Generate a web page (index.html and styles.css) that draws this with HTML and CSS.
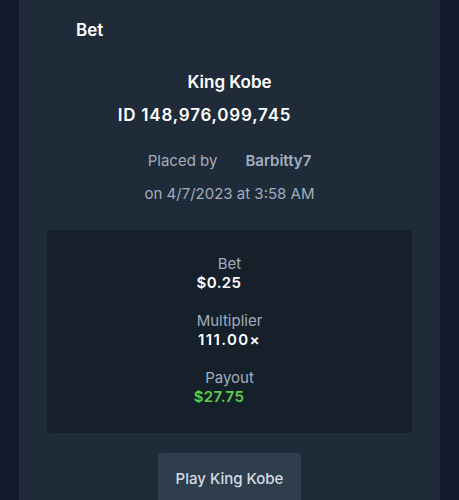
FILE: index.html
```html
<!doctype html>
<html lang="en">
    <head>
        <meta charset="UTF-8" />
        <meta name="viewport" content="width=device-width, initial-scale=1.0" />
        <title>Bet</title>
        <link rel="stylesheet" href="styles.css">
    </head>
    <body>
        <div class="panel">
            <div class="title">Bet</div>
            <div class="game">King Kobe</div>
            <div class="bet-id">ID 148,976,099,745</div>
            <div class="placed">
                <span class="placed-label">Placed by</span>
                <span class="user">Barbitty7</span>
            </div>
            <div class="date">on 4/7/2023 at 3:58 AM</div>
            <div class="stats">
                <div class="stat">
                    <div class="label">Bet</div>
                    <div class="value shift">$0.25</div>
                </div>
                <div class="stat">
                    <div class="label">Multiplier</div>
                    <div class="value wide">111.00×</div>
                </div>
                <div class="stat">
                    <div class="label">Payout</div>
                    <div class="value shift green">$27.75</div>
                </div>
            </div>
            <div class="actions">
                <button class="play">Play King Kobe</button>
            </div>
        </div>
    </body>
</html>
```

FILE: styles.css
```css
:root {
    --bg: #141a2b;
    --panel: #1f2b38;
    --inner: #15202b;
    --muted: #a3adbd;
    --green: #5fcf4a;
}
html, body {
    margin: 0;
    height: 100%;
    overflow: hidden;
}
body {
    background: var(--bg);
    color: white;
    font-family: Inter, "Open Sans", Arial, sans-serif;
}
.panel {
    background: var(--panel);
    margin: 0 19px;
    height: 100%;
    padding-top: 20px;
    box-sizing: border-box;
}
.title {
    font-size: 17px;
    font-weight: 600;
    line-height: 20px;
    padding-left: 57px;
}
.game {
    font-size: 17px;
    font-weight: 600;
    line-height: 20px;
    text-align: center;
    margin-top: 32px;
}
.bet-id {
    font-size: 17px;
    font-weight: 600;
    line-height: 20px;
    letter-spacing: 0.8px;
    text-align: center;
    margin-top: 13px;
    padding-right: 50px;
}
.placed {
    margin-top: 26px;
    line-height: 20px;
    font-size: 15px;
    color: var(--muted);
    display: flex;
    justify-content: center;
    gap: 28px;
}
.user {
    font-weight: 600;
}
.date {
    margin-top: 13px;
    line-height: 20px;
    font-size: 15px;
    color: var(--muted);
    text-align: center;
}
.stats {
    background: var(--inner);
    margin: 26px 28px 0;
    border-radius: 4px;
    padding: 24px 0 26px;
    display: flex;
    flex-direction: column;
    gap: 18px;
}
.stat {
    text-align: center;
}
.label {
    font-size: 15px;
    line-height: 19px;
    color: var(--muted);
}
.value {
    font-size: 15px;
    font-weight: 600;
    line-height: 20px;
    letter-spacing: 0.4px;
}
.wide {
    letter-spacing: 1.4px;
}
.shift {
    padding-right: 21px;
}
.green {
    color: var(--green);
}
.actions {
    display: flex;
    justify-content: center;
    margin-top: 20px;
}
.play {
    background: #2e3e4d;
    color: #d5dbe3;
    border: none;
    border-radius: 4px;
    width: 143px;
    height: 50px;
    font-family: inherit;
    font-size: 15px;
    font-weight: 500;
}
```
